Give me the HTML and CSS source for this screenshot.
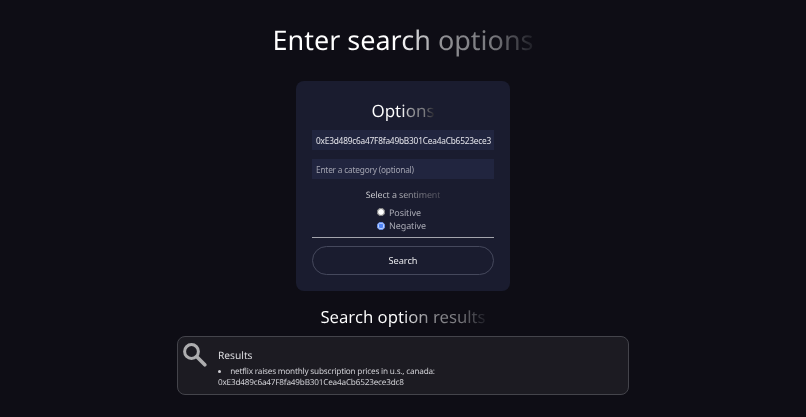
FILE: index.html
```html
<!DOCTYPE html>
<html lang="en">
<head>
<meta charset="utf-8">
<title>Enter search options</title>
<link rel="stylesheet" href="styles.css">
</head>
<body>
<main class="page">
  <h1 class="title fade">Enter search options</h1>
  <form class="card">
    <h2 class="card-title fade">Options</h2>
    <input class="field field-address" type="text" value="0xE3d489c6a47F8fa49bB301Cea4aCb6523ece3dc8">
    <input class="field field-category" type="text" placeholder="Enter a category (optional)">
    <p class="legend fade-soft">Select a sentiment</p>
    <div class="radios">
      <label class="radio"><input type="radio" name="sentiment">Positive</label>
      <label class="radio"><input type="radio" name="sentiment" checked>Negative</label>
    </div>
    <hr class="rule">
    <button class="search" type="button">Search</button>
  </form>
  <h2 class="results-title fade">Search option results</h2>
  <section class="results">
    <svg class="icon" viewBox="0 0 24 24" width="24" height="24" aria-hidden="true">
      <circle cx="8.5" cy="8.5" r="6.9" fill="none" stroke="#adadaf" stroke-width="3"/>
      <path d="M13.8 13.8 L21.8 21.8" fill="none" stroke="#adadaf" stroke-width="3.6" stroke-linecap="round"/>
    </svg>
    <div class="results-body">
      <h3 class="results-head">Results</h3>
      <ul class="results-list">
        <li>netflix raises monthly subscription prices in u.s., canada: <span class="addr">0xE3d489c6a47F8fa49bB301Cea4aCb6523ece3dc8</span></li>
      </ul>
    </div>
  </section>
</main>
</body>
</html>
```
FILE: styles.css
```css
* { box-sizing: border-box; }
html, body { margin: 0; height: 100%; }
body {
  background: #0e0d15;
  color: #e6e6ea;
  font-family: "Noto Sans", "Open Sans", sans-serif;
  overflow: hidden;
  text-rendering: geometricPrecision;
}
.page {
  display: flex;
  flex-direction: column;
  align-items: center;
  height: 417px;
  filter: blur(0.35px);
}
.fade {
  background: linear-gradient(90deg, #fff 0%, #fff 48%, #929296 64%, #77777c 85%, #1c1c24 100%);
  -webkit-background-clip: text;
  background-clip: text;
  color: transparent;
}
.fade-soft {
  background: linear-gradient(90deg, #d8d8dc 0%, #c0c0c5 40%, #4f4f5a 100%);
  -webkit-background-clip: text;
  background-clip: text;
  color: transparent;
}
.title {
  margin: 20px 0 0;
  font-size: 27px;
  font-weight: 400;
  line-height: 40px;
  width: max-content;
}
.card {
  margin-top: 21px;
  width: 214px;
  height: 210px;
  padding: 18px 16px 0;
  background: #1a1c2f;
  border-radius: 8px;
  display: flex;
  flex-direction: column;
  align-items: center;
}
.card-title {
  margin: 0;
  font-size: 17px;
  font-weight: 400;
  line-height: 24px;
  width: max-content;
}
.field {
  display: block;
  width: 182px;
  height: 20px;
  border: 0;
  border-radius: 0;
  padding: 0 3px 0 4px;
  outline: 0;
  background: #21253f;
  color: #e4e4ea;
  font-family: inherit;
  font-size: 8.3px;
  letter-spacing: -0.2px;
}
.field-address { margin-top: 7px; }
.field-category { margin-top: 9px; }
.field-category::placeholder { color: #a2a3b0; opacity: 1; }
.legend {
  margin: 10px 0 0;
  font-size: 8.9px;
  letter-spacing: -0.1px;
  line-height: 12px;
  width: max-content;
}
.radios {
  margin-top: 5px;
  display: flex;
  flex-direction: column;
  gap: 1px;
  align-self: flex-start;
  margin-left: 65px;
}
.radio {
  display: flex;
  align-items: center;
  height: 12.5px;
  font-size: 9px;
  letter-spacing: -0.1px;
  color: #a9aab4;
}
.radio input {
  margin: 0 4px 0 0;
  width: 8px;
  height: 8px;
  accent-color: #4f83f5;
}
.rule {
  margin: 5px 0 0;
  width: 182px;
  border: 0;
  border-top: 1px solid #a4a5ad;
}
.search {
  margin-top: 8px;
  width: 182px;
  height: 29px;
  border: 1px solid #45485c;
  border-radius: 15px;
  background: transparent;
  color: #e6e6ea;
  font-family: inherit;
  font-size: 9.2px;
}
.results-title {
  margin: 14px 0 0;
  font-size: 16.7px;
  font-weight: 400;
  line-height: 24px;
  width: max-content;
}
.results {
  margin-top: 7px;
  width: 452px;
  height: 59px;
  display: flex;
  background: #1c1b22;
  border: 1px solid #44444b;
  border-radius: 8px;
}
.icon {
  margin: 6px 0 0 5px;
  flex: none;
}
.results-body {
  margin-left: 11px;
  padding-top: 11px;
  width: 225px;
}
.results-head {
  margin: 0;
  font-size: 10.2px;
  font-weight: 400;
  line-height: 14px;
  color: #dcdce0;
}
.results-list {
  margin: 4px 0 0;
  padding: 0;
  list-style-position: inside;
  font-size: 8.2px;
  letter-spacing: -0.2px;
  line-height: 11px;
  color: #cfcfd4;
}
.addr { white-space: nowrap; }
```
